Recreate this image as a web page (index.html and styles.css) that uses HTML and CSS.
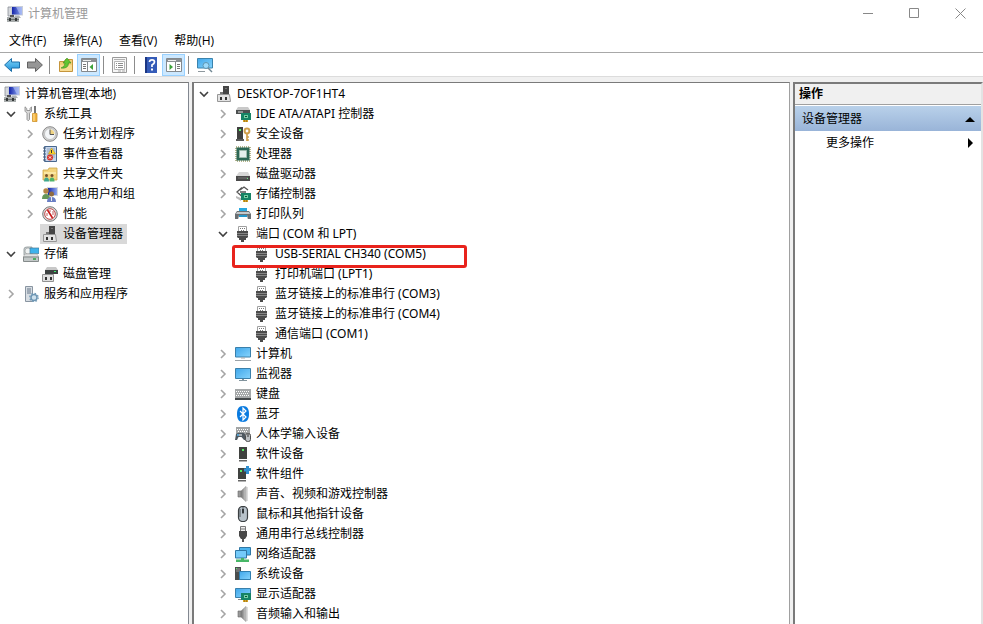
FILE: index.html
```html
<!DOCTYPE html>
<html lang="zh-CN">
<head>
    <meta charset="UTF-8">
    <meta name="viewport" content="width=device-width, initial-scale=1.0">
    <title>计算机管理</title>
    <link rel="stylesheet" href="styles.css">
</head>
<body>
    <!-- icon sprite -->
    <svg class="sprite" aria-hidden="true">
        <defs>
            <linearGradient id="g-screen" x1="0" y1="0" x2="1" y2="1">
                <stop offset="0" stop-color="#3fa6ea"/><stop offset="1" stop-color="#86d4fd"/>
            </linearGradient>
            <linearGradient id="g-navy" x1="0" y1="0" x2="1" y2="0">
                <stop offset="0" stop-color="#1222a8"/><stop offset="1" stop-color="#8fa8f0"/>
            </linearGradient>
            <linearGradient id="g-back" x1="0" y1="0" x2="0" y2="1">
                <stop offset="0" stop-color="#7fd4f8"/><stop offset="1" stop-color="#1c8fd8"/>
            </linearGradient>
            <linearGradient id="g-metal" x1="0" y1="0" x2="1" y2="0">
                <stop offset="0" stop-color="#6e6e6e"/><stop offset="1" stop-color="#d0d0d0"/>
            </linearGradient>
        </defs>
        <symbol id="right" viewBox="0 0 10 10"><path d="M3 1l4 4-4 4" fill="none" stroke="#a6a6a6" stroke-width="1.6"/></symbol>
        <symbol id="down" viewBox="0 0 10 10"><path d="M1 3l4 4 4-4" fill="none" stroke="#404040" stroke-width="1.6"/></symbol>
        <symbol id="mmc" viewBox="0 0 16 16">
            <path d="M1 1h4v9H1z" fill="#d5d8dc" stroke="#8a9098" stroke-width=".8"/>
            <path d="M4 0h12v9.500H4z" fill="#c9ced8"/><path d="M5 1h10v7.500H5z" fill="url(#g-navy)"/>
            <path d="M9 1l4 7.500h2V1z" fill="#b8c6f8" opacity=".6"/>
            <path d="M8 9.500h4l2 2.500H7z" fill="#aeb3b8"/>
            <path d="M3 9h4v2H3z" fill="#555"/><path d="M0 11h12v5H0z" fill="#a9adad"/>
            <path d="M0 13h12v1H0z" fill="#6d7373"/><path d="M2 12h2v3H2zM8 12h2v3H8z" fill="#343838"/>
        </symbol>
        <symbol id="device" viewBox="0 0 16 16">
            <path d="M7 0h6v9H7z" fill="#454545"/><path d="M9 2h2v1H9z" fill="#777"/>
            <path d="M4 6h3v3H4z" fill="#777"/>
            <path d="M1.500 8.500h12l1 7H1.500z" fill="#e3e3e3" stroke="#969696"/>
            <path d="M4 11h2v3H4zM9 11h2v3H9z" fill="#333"/>
        </symbol>
        <symbol id="tools" viewBox="0 0 16 16">
            <path d="M2 .8v4.400l2 2V13.500q1 2.500 2.500 0V7.200l2-2V.8L7 2.500v2H3.800v-2z" fill="#d9d9d9" stroke="#858585" stroke-width=".8"/>
            <path d="M11 0h2v7h-2z" fill="#777"/><path d="M9.500 7.500h4.500v8h-4.500z" fill="#f4b33c" stroke="#c78a1c" stroke-width=".7"/>
            <path d="M11 8v7" stroke="#ffe2a0"/>
        </symbol>
        <symbol id="clock" viewBox="0 0 16 16">
            <circle cx="8" cy="8" r="7.300" fill="#d5d5d5" stroke="#888"/><circle cx="8" cy="8" r="5.500" fill="#f4f6f8" stroke="#a9a9a9" stroke-width=".6"/>
            <path d="M8 8V3.500A4.500 4.500 0 0 1 12.500 8z" fill="#f0d484"/><path d="M8 3.500V8.500h4" fill="none" stroke="#555"/>
        </symbol>
        <symbol id="events" viewBox="0 0 16 16">
            <path d="M2.500.5h12v15h-12z" fill="#c5d5eb" stroke="#49688f"/><path d="M5 3h8M5 5h8M5 7h8M5 9h8M5 11h8" stroke="#8699b2" stroke-width=".8"/>
            <path d="M1 2h3M1 5h3M1 8h3M1 11h3M1 14h3" stroke="#455d7a"/>
            <path d="M9.500 2l4 6h-7z" fill="#ffd72e" stroke="#c79b16" stroke-width=".6"/><path d="M9.500 4v3" stroke="#333"/>
            <circle cx="8" cy="11.500" r="3" fill="#d9352d"/><path d="M6.800 10.300l2.400 2.400M9.200 10.300l-2.400 2.400" stroke="#fff" stroke-width=".9"/>
        </symbol>
        <symbol id="share" viewBox="0 0 16 16">
            <path d="M1 4h5l1-2h8v12H1z" fill="#f3d47c" stroke="#cda648" stroke-width=".8"/><path d="M2 6h12v2H2z" fill="#fae7a4"/>
            <circle cx="4.500" cy="9.500" r="1.500" fill="#76512d"/><path d="M2 15.500q0-4 2.500-4t2.500 4z" fill="#3fa78e"/>
            <circle cx="10" cy="9.500" r="1.500" fill="#76512d"/><path d="M7.500 15.500q0-4 2.500-4t2.500 4z" fill="#4eb46a"/>
        </symbol>
        <symbol id="users" viewBox="0 0 16 16">
            <path d="M5 1h11v9H5z" fill="#d3d7df"/><path d="M6 2h9v7H6z" fill="url(#g-navy)"/>
            <circle cx="4" cy="5" r="2.700" fill="#b58547"/><path d="M0 13q0-5 4-5t4 5z" fill="#65965a"/>
            <circle cx="9.500" cy="8" r="2.500" fill="#8f6b42"/><path d="M5 16q0-5 4.500-5t4.500 5z" fill="#6a7fc4"/><path d="M9 11h1v4H9z" fill="#eee"/>
        </symbol>
        <symbol id="perf" viewBox="0 0 16 16">
            <circle cx="8" cy="8" r="7.300" fill="#ddd" stroke="#777"/><circle cx="8" cy="8" r="5.300" fill="#fff" stroke="#b33" stroke-width=".9"/>
            <path d="M5.500 4l5 8" stroke="#c81818" stroke-width="1.600"/><path d="M5 7v3M8 4v2M11 5v4" stroke="#a33" stroke-width=".8"/>
        </symbol>
        <symbol id="storage" viewBox="0 0 16 16">
            <path d="M1 3q0-2 3-2h5v8H1z" fill="#cbd2d4" stroke="#8b9496" stroke-width=".8"/><circle cx="5" cy="5" r="3" fill="#eef2f2" stroke="#999" stroke-width=".6"/>
            <path d="M7 2h9v5.500H7z" fill="#3fb2ec" stroke="#447b9b" stroke-width=".7"/>
            <path d="M2 8h12l2 3H0z" fill="#e0e2e2" stroke="#999" stroke-width=".5"/><path d="M.5 11h15v4.500H.500z" fill="#c3c8c8" stroke="#858b8b"/><path d="M10 13h3" stroke="#29a541" stroke-width="1.500"/>
        </symbol>
        <symbol id="diskmgr" viewBox="0 0 16 16">
            <path d="M5 1h9l2 3H3z" fill="#c8c8c8"/><path d="M3 4h13v4H3z" fill="#3e4242"/><path d="M12 5h2v1h-2z" fill="#3df06d"/>
            <path d="M.5 8.500h11v7H.500z" fill="#e0e0e0" stroke="#929292"/><path d="M3 11h2v3H3zM8 11h2v3H8z" fill="#333"/>
        </symbol>
        <symbol id="services" viewBox="0 0 16 16">
            <path d="M2.500.5h7v15h-7z" fill="#d7dde3" stroke="#8995a1"/><path d="M4 3h4M4 5h4M4 7h4" stroke="#667788"/>
            <circle cx="11" cy="11.500" r="3" fill="#cfe1ed" stroke="#6f97b4" stroke-width="1.500"/>
            <circle cx="11" cy="11.500" r="4.200" fill="none" stroke="#6f97b4" stroke-width="1.200" stroke-dasharray="1.600 1.700"/>
        </symbol>
        <symbol id="board" viewBox="0 0 16 16">
            <path d="M6 7h10v7H6z" fill="#168365"/><path d="M9 9h4v3H9z" fill="#75d1a3"/><path d="M10 10h2v1h-2z" fill="#0d4a36"/>
            <path d="M8 14h5v2H8z" fill="#d7a326"/><path d="M9.500 14v2M11.500 14v2" stroke="#805d10" stroke-width=".5"/>
        </symbol>
        <symbol id="ide" viewBox="0 0 16 16">
            <path d="M3 1h10l2 3H1z" fill="#c9c9c9"/><path d="M1 4h14v4H1z" fill="#4d5050"/><path d="M3 6h5" stroke="#ddd"/><use href="#board"/>
        </symbol>
        <symbol id="security" viewBox="0 0 16 16">
            <path d="M2 1h6v12H2z" fill="#3f403e"/><path d="M4 3h2v2H4z" fill="#5df06b"/><path d="M1 13h8v2H1z" fill="#5a5a5a"/>
            <circle cx="12" cy="5" r="2.400" fill="none" stroke="#d0a04c" stroke-width="2"/><path d="M12 7.500V15M12 11h2M12 14h2" stroke="#d0a04c" stroke-width="1.700"/>
        </symbol>
        <symbol id="cpu" viewBox="0 0 16 16">
            <path d="M1 1h14v14H1z" fill="none" stroke="#9d9d69" stroke-width="1.500" stroke-dasharray="1 1"/>
            <path d="M1.500 1.500h13v13h-13z" fill="#2c6754"/><path d="M4.500 4.500h7v7h-7z" fill="#e4eeeb" stroke="#9ebaae"/>
        </symbol>
        <symbol id="disk" viewBox="0 0 16 16">
            <path d="M4 6h9l2 4H1z" fill="#d7d7d7"/><path d="M1 10h14v5H1z" fill="#4a4a4a"/><path d="M3 12h10" stroke="#777"/><path d="M12 12h1v1h-1z" fill="#70e784"/>
        </symbol>
        <symbol id="scsi" viewBox="0 0 16 16">
            <path d="M7 1.500L2 6l5 4.500M5 6h6M5 4l4-3 4 3" fill="none" stroke="#555" stroke-width="1.300"/><path d="M1 10l5 2v3l-5-3z" fill="#bbb"/><use href="#board"/>
        </symbol>
        <symbol id="printer" viewBox="0 0 16 16">
            <path d="M4 2h8v4H4z" fill="#28a9e0"/><path d="M2 5h12l2 3v5H0V8z" fill="#6a6f72"/><path d="M2 6h12l1 2H1z" fill="#c4c8ca"/>
            <path d="M4 9h8l1 5H3z" fill="#fff"/><path d="M4 9h8v2H4z" fill="#2596c9"/>
        </symbol>
        <symbol id="port" viewBox="0 0 16 16">
            <path d="M3.500.5h8v5h-8z" fill="#fff" stroke="#a0a0a0"/><path d="M5 2h1v1H5zM7 2h1v1H7zM9 2h1v1H9zM6 4h1v1H6zM8 4h1v1H8z" fill="#777"/>
            <path d="M2 5h11v6l-1 1H3l-1-1z" fill="#4b4b4b"/><path d="M2 7.500h11M2 9.500h11" stroke="#858585"/><path d="M4 12h2v2H4zM9 12h2v2H9zM6 11h3v5H6z" fill="#4b4b4b"/>
        </symbol>
        <symbol id="computer" viewBox="0 0 16 16">
            <path d="M.5 1.500h15v9.500H.500z" fill="url(#g-screen)" stroke="#3a80ab"/><path d="M0 14.500h16" stroke="#9aa2a8"/><path d="M6 12h4" stroke="#aaa"/>
        </symbol>
        <symbol id="monitor" viewBox="0 0 16 16">
            <path d="M.5 2.500h15v10H.500z" fill="url(#g-screen)" stroke="#3a80ab"/><path d="M7 13h2v1h3v1H4v-1h3z" fill="#81939d"/>
        </symbol>
        <symbol id="keyboard" viewBox="0 0 16 16">
            <path d="M0 3h16v9H0z" fill="#a5a8a9"/><path d="M0 12h16v2H0z" fill="#45494b"/>
            <path d="M1 5.500h14M2 7.500h12M1 9.500h14" stroke="#fff" stroke-dasharray="1 1"/>
        </symbol>
        <symbol id="bluetooth" viewBox="0 0 16 16">
            <path d="M8 0c4.500 0 6 3.500 6 8s-1.500 8-6 8-6-3.500-6-8 1.500-8 6-8z" fill="#0a7be0"/><path d="M5 5l6 6-3 3V2l3 3-6 6" fill="none" stroke="#fff" stroke-width="1.200"/>
        </symbol>
        <symbol id="hid" viewBox="0 0 16 16">
            <path d="M1 1h14v7H1z" fill="#a2a5a5"/><path d="M2 3.500h12M3 5.500h10" stroke="#fff" stroke-dasharray="1 1"/>
            <path d="M1 8q3-2 5-1 2-1 4 1l1 6H9L6.500 11h-3L2 14H0z" fill="#4e5961"/><circle cx="3" cy="9" r="1" fill="#5eb8f0"/><path d="M4 9h3" stroke="#fff"/>
            <rect x="10.500" y="7.500" width="5" height="8" rx="2" fill="#bcc1c4" stroke="#4d4d4d"/><path d="M13 8v3" stroke="#333"/>
        </symbol>
        <symbol id="software" viewBox="0 0 16 16">
            <path d="M4 1h8v12H4z" fill="#40423f"/><path d="M7 3h2v2H7z" fill="#54ee63"/><path d="M4 14h8v1.500H4z" fill="#666"/>
        </symbol>
        <symbol id="component" viewBox="0 0 16 16">
            <path d="M3 2h8v11H3z" fill="#40423f"/><path d="M5 4h2v2H5z" fill="#54ee63"/><path d="M3 14h8v1.500H3z" fill="#666"/>
            <path d="M11 0h3v2h2v3h-2v3h-3V5.500H9v-3h2z" fill="#2f8fd0"/>
        </symbol>
        <symbol id="sound" viewBox="0 0 16 16">
            <path d="M3 5h3v6H3z" fill="#999" stroke="#666" stroke-width=".6"/><path d="M6 5l5-4.500v15L6 11z" fill="url(#g-metal)" stroke="#8a8a8a" stroke-width=".6"/><path d="M12 1v14" stroke="#bbb"/>
        </symbol>
        <symbol id="mouse" viewBox="0 0 16 16">
            <rect x="3.500" y=".5" width="9" height="15" rx="4" fill="#b8c2ca" stroke="#3b3f42" stroke-width="1.200"/><path d="M8 1v7M5 3v8" stroke="#4d5357"/><path d="M7 3h2v4H7z" fill="#33383b"/>
        </symbol>
        <symbol id="usb" viewBox="0 0 16 16">
            <path d="M5.500.5h5v5h-5z" fill="#eee" stroke="#777"/><path d="M7 2v2M9 2v2" stroke="#777"/><path d="M4 5h8v5l-2 3H6l-2-3z" fill="#484848"/><path d="M7 13h2v3H7z" fill="#555"/>
        </symbol>
        <symbol id="network" viewBox="0 0 16 16">
            <path d="M4.500 1.500h11v7.500h-11z" fill="#4cb4ee" stroke="#3078a5"/><path d="M.5 4.500h11v7.500H.500z" fill="#74cbfa" stroke="#3078a5"/>
            <path d="M6 12h3v1.500h5V16H1v-2.500h5z" fill="#48b767"/>
        </symbol>
        <symbol id="system" viewBox="0 0 16 16">
            <path d="M0 1h6v13H0z" fill="#4a4e4e"/><path d="M1 3h4M1 5h4" stroke="#999"/><path d="M1 2h1v1H1z" fill="#5e6"/><path d="M4.500 5.500h11v8h-11z" fill="url(#g-screen)" stroke="#2f7eb0"/>
        </symbol>
        <symbol id="display" viewBox="0 0 16 16">
            <path d="M.5 2.500h15v9H.500z" fill="url(#g-screen)" stroke="#3a80ab"/><path d="M3 13h4v1H3z" fill="#888"/><use href="#board"/>
        </symbol>
        <symbol id="back" viewBox="0 0 16 16"><path d="M.6 8L7.500 1.500v3.500h8v6h-8v3.500z" fill="url(#g-back)" stroke="#1d6fa8"/></symbol>
        <symbol id="forward" viewBox="0 0 16 16"><path d="M15.400 8L8.500 1.500v3.500h-8v6h8v3.500z" fill="#969696" stroke="#626262"/></symbol>
        <symbol id="up" viewBox="0 0 16 16">
            <path d="M1.500 4.500h5l1-2h7v12h-13z" fill="#f3cf78" stroke="#c5953c"/><path d="M2 8h12v6H2z" fill="#f8dc93"/>
            <path d="M3 11q4-1 4-5H5L9 1l4 5h-2.500q0 6-7.500 5z" fill="#62c532" stroke="#348c19" stroke-width=".6"/>
        </symbol>
        <symbol id="treepane" viewBox="0 0 16 16">
            <path d="M.5 1.500h15v13H.500z" fill="#fff" stroke="#84898d"/><path d="M1 2h14v3H1z" fill="#8b9094"/><path d="M2 3.500h8" stroke="#eee"/>
            <path d="M6.500 5v9" stroke="#84898d"/><path d="M2 7.500h3M2 9.500h3M2 11.500h3" stroke="#777"/><path d="M12 7v6L8.500 10z" fill="#3ca33a"/>
        </symbol>
        <symbol id="actionpane" viewBox="0 0 16 16">
            <path d="M.5 1.500h15v13H.500z" fill="#fff" stroke="#84898d"/><path d="M1 2h14v3H1z" fill="#8b9094"/><path d="M2 3.500h8" stroke="#eee"/>
            <path d="M9.500 5v9" stroke="#84898d"/><path d="M11 7.500h3M11 9.500h3M11 11.500h3" stroke="#777"/><path d="M3.500 7v6L7 10z" fill="#3ca33a"/>
        </symbol>
        <symbol id="props" viewBox="0 0 16 16">
            <path d="M.5.5h14v15H.500z" fill="#f6f6f6" stroke="#9a9a9a"/><path d="M2.500 4.500h10v8h-10z" fill="#fff" stroke="#b5b5b5"/><path d="M2 2.500h11" stroke="#b0b0b0"/>
            <path d="M4 6.500h1M4 8.500h1M4 10.500h1M6 6.500h5M6 8.500h5M6 10.500h5" stroke="#8d8d8d"/><path d="M6 14h3M10 14h3" stroke="#aaa"/>
        </symbol>
        <symbol id="help" viewBox="0 0 16 16">
            <path d="M2 0h12v16H2z" fill="#345bb8"/><path d="M2 0h2v16H2z" fill="#1c3784"/>
            <path d="M6.500 5q0-2.200 2.500-2.200T11.500 5Q11.500 6.500 9 8v2" fill="none" stroke="#fff" stroke-width="1.700"/><path d="M8 11.500h2v2H8z" fill="#fff"/>
        </symbol>
        <symbol id="scan" viewBox="0 0 16 16">
            <path d="M.5 1.500h15v9.500H.500z" fill="url(#g-screen)" stroke="#3b83ad"/><path d="M1 14.500h7" stroke="#8e989e"/>
            <circle cx="9" cy="8.500" r="3" fill="#9bd9fb" stroke="#5d95b2"/><path d="M11 11l4 4" stroke="#718793" stroke-width="1.500"/>
        </symbol>
    </svg>

    <div class="window">
        <header class="titlebar">
            <svg class="icon"><use href="#mmc"/></svg>
            <h1>计算机管理</h1>
            <div class="caption">
                <button type="button" aria-label="最小化"><svg viewBox="0 0 11 11"><path d="M0 5.500h10"/></svg></button>
                <button type="button" aria-label="最大化"><svg viewBox="0 0 11 11"><path d="M.5.5h9v9h-9z"/></svg></button>
                <button type="button" aria-label="关闭"><svg viewBox="0 0 11 11"><path d="M.5.5l10 10M10.500.5l-10 10"/></svg></button>
            </div>
        </header>

        <nav class="menubar">
            <button type="button">文件(F)</button>
            <button type="button">操作(A)</button>
            <button type="button">查看(V)</button>
            <button type="button">帮助(H)</button>
        </nav>

        <div class="toolbar">
            <button type="button" aria-label="后退"><svg class="icon"><use href="#back"/></svg></button>
            <button type="button" aria-label="前进"><svg class="icon"><use href="#forward"/></svg></button>
            <span class="sep"></span>
            <button type="button" aria-label="向上"><svg class="icon"><use href="#up"/></svg></button>
            <button type="button" class="on" aria-label="显示控制台树"><svg class="icon"><use href="#treepane"/></svg></button>
            <span class="sep"></span>
            <button type="button" aria-label="属性"><svg class="icon"><use href="#props"/></svg></button>
            <span class="sep"></span>
            <button type="button" aria-label="帮助"><svg class="icon"><use href="#help"/></svg></button>
            <button type="button" class="on" aria-label="显示操作窗格"><svg class="icon"><use href="#actionpane"/></svg></button>
            <span class="sep"></span>
            <button type="button" aria-label="扫描检测硬件改动"><svg class="icon"><use href="#scan"/></svg></button>
        </div>

        <main class="panes">
            <section class="pane console">
                <ul class="tree">
                    <li>
                        <div class="row"><span class="label"><svg class="icon"><use href="#mmc"/></svg>计算机管理(本地)</span></div>
                        <ul>
                            <li>
                                <div class="row"><button type="button" class="toggle" aria-label="折叠"><svg><use href="#down"/></svg></button><span class="label"><svg class="icon"><use href="#tools"/></svg>系统工具</span></div>
                                <ul>
                                    <li class="row"><button type="button" class="toggle" aria-label="展开"><svg><use href="#right"/></svg></button><span class="label"><svg class="icon"><use href="#clock"/></svg>任务计划程序</span></li>
                                    <li class="row"><button type="button" class="toggle" aria-label="展开"><svg><use href="#right"/></svg></button><span class="label"><svg class="icon"><use href="#events"/></svg>事件查看器</span></li>
                                    <li class="row"><button type="button" class="toggle" aria-label="展开"><svg><use href="#right"/></svg></button><span class="label"><svg class="icon"><use href="#share"/></svg>共享文件夹</span></li>
                                    <li class="row"><button type="button" class="toggle" aria-label="展开"><svg><use href="#right"/></svg></button><span class="label"><svg class="icon"><use href="#users"/></svg>本地用户和组</span></li>
                                    <li class="row"><button type="button" class="toggle" aria-label="展开"><svg><use href="#right"/></svg></button><span class="label"><svg class="icon"><use href="#perf"/></svg>性能</span></li>
                                    <li class="row"><span class="label selected"><svg class="icon"><use href="#device"/></svg>设备管理器</span></li>
                                </ul>
                            </li>
                            <li>
                                <div class="row"><button type="button" class="toggle" aria-label="折叠"><svg><use href="#down"/></svg></button><span class="label"><svg class="icon"><use href="#storage"/></svg>存储</span></div>
                                <ul>
                                    <li class="row"><span class="label"><svg class="icon"><use href="#diskmgr"/></svg>磁盘管理</span></li>
                                </ul>
                            </li>
                            <li class="row"><button type="button" class="toggle" aria-label="展开"><svg><use href="#right"/></svg></button><span class="label"><svg class="icon"><use href="#services"/></svg>服务和应用程序</span></li>
                        </ul>
                    </li>
                </ul>
            </section>

            <section class="pane devices">
                <ul class="tree">
                    <li>
                        <div class="row"><button type="button" class="toggle" aria-label="折叠"><svg><use href="#down"/></svg></button><span class="label"><svg class="icon"><use href="#device"/></svg>DESKTOP-7OF1HT4</span></div>
                        <ul>
                            <li class="row"><button type="button" class="toggle" aria-label="展开"><svg><use href="#right"/></svg></button><span class="label"><svg class="icon"><use href="#ide"/></svg>IDE ATA/ATAPI 控制器</span></li>
                            <li class="row"><button type="button" class="toggle" aria-label="展开"><svg><use href="#right"/></svg></button><span class="label"><svg class="icon"><use href="#security"/></svg>安全设备</span></li>
                            <li class="row"><button type="button" class="toggle" aria-label="展开"><svg><use href="#right"/></svg></button><span class="label"><svg class="icon"><use href="#cpu"/></svg>处理器</span></li>
                            <li class="row"><button type="button" class="toggle" aria-label="展开"><svg><use href="#right"/></svg></button><span class="label"><svg class="icon"><use href="#disk"/></svg>磁盘驱动器</span></li>
                            <li class="row"><button type="button" class="toggle" aria-label="展开"><svg><use href="#right"/></svg></button><span class="label"><svg class="icon"><use href="#scsi"/></svg>存储控制器</span></li>
                            <li class="row"><button type="button" class="toggle" aria-label="展开"><svg><use href="#right"/></svg></button><span class="label"><svg class="icon"><use href="#printer"/></svg>打印队列</span></li>
                            <li>
                                <div class="row"><button type="button" class="toggle" aria-label="折叠"><svg><use href="#down"/></svg></button><span class="label"><svg class="icon"><use href="#port"/></svg>端口 (COM 和 LPT)</span></div>
                                <ul>
                                    <li class="row marked"><span class="label"><svg class="icon"><use href="#port"/></svg>USB-SERIAL CH340 (COM5)</span></li>
                                    <li class="row"><span class="label"><svg class="icon"><use href="#port"/></svg>打印机端口 (LPT1)</span></li>
                                    <li class="row"><span class="label"><svg class="icon"><use href="#port"/></svg>蓝牙链接上的标准串行 (COM3)</span></li>
                                    <li class="row"><span class="label"><svg class="icon"><use href="#port"/></svg>蓝牙链接上的标准串行 (COM4)</span></li>
                                    <li class="row"><span class="label"><svg class="icon"><use href="#port"/></svg>通信端口 (COM1)</span></li>
                                </ul>
                            </li>
                            <li class="row"><button type="button" class="toggle" aria-label="展开"><svg><use href="#right"/></svg></button><span class="label"><svg class="icon"><use href="#computer"/></svg>计算机</span></li>
                            <li class="row"><button type="button" class="toggle" aria-label="展开"><svg><use href="#right"/></svg></button><span class="label"><svg class="icon"><use href="#monitor"/></svg>监视器</span></li>
                            <li class="row"><button type="button" class="toggle" aria-label="展开"><svg><use href="#right"/></svg></button><span class="label"><svg class="icon"><use href="#keyboard"/></svg>键盘</span></li>
                            <li class="row"><button type="button" class="toggle" aria-label="展开"><svg><use href="#right"/></svg></button><span class="label"><svg class="icon"><use href="#bluetooth"/></svg>蓝牙</span></li>
                            <li class="row"><button type="button" class="toggle" aria-label="展开"><svg><use href="#right"/></svg></button><span class="label"><svg class="icon"><use href="#hid"/></svg>人体学输入设备</span></li>
                            <li class="row"><button type="button" class="toggle" aria-label="展开"><svg><use href="#right"/></svg></button><span class="label"><svg class="icon"><use href="#software"/></svg>软件设备</span></li>
                            <li class="row"><button type="button" class="toggle" aria-label="展开"><svg><use href="#right"/></svg></button><span class="label"><svg class="icon"><use href="#component"/></svg>软件组件</span></li>
                            <li class="row"><button type="button" class="toggle" aria-label="展开"><svg><use href="#right"/></svg></button><span class="label"><svg class="icon"><use href="#sound"/></svg>声音、视频和游戏控制器</span></li>
                            <li class="row"><button type="button" class="toggle" aria-label="展开"><svg><use href="#right"/></svg></button><span class="label"><svg class="icon"><use href="#mouse"/></svg>鼠标和其他指针设备</span></li>
                            <li class="row"><button type="button" class="toggle" aria-label="展开"><svg><use href="#right"/></svg></button><span class="label"><svg class="icon"><use href="#usb"/></svg>通用串行总线控制器</span></li>
                            <li class="row"><button type="button" class="toggle" aria-label="展开"><svg><use href="#right"/></svg></button><span class="label"><svg class="icon"><use href="#network"/></svg>网络适配器</span></li>
                            <li class="row"><button type="button" class="toggle" aria-label="展开"><svg><use href="#right"/></svg></button><span class="label"><svg class="icon"><use href="#system"/></svg>系统设备</span></li>
                            <li class="row"><button type="button" class="toggle" aria-label="展开"><svg><use href="#right"/></svg></button><span class="label"><svg class="icon"><use href="#display"/></svg>显示适配器</span></li>
                            <li class="row"><button type="button" class="toggle" aria-label="展开"><svg><use href="#right"/></svg></button><span class="label"><svg class="icon"><use href="#sound"/></svg>音频输入和输出</span></li>
                        </ul>
                    </li>
                </ul>
            </section>

            <aside class="pane actions">
                <h2>操作</h2>
                <button type="button" class="group">设备管理器<svg viewBox="0 0 10 10"><path d="M0 8l5-5 5 5z"/></svg></button>
                <button type="button" class="more">更多操作<svg viewBox="0 0 10 10"><path d="M3 0l5 5-5 5z"/></svg></button>
            </aside>
        </main>
    </div>
</body>
</html>
```
FILE: styles.css
```css
* {
    margin: 0;
    padding: 0;
    box-sizing: border-box;
}

body {
    font-family: "Open Sans", "Noto Sans CJK SC", sans-serif;
    font-size: 12px;
    line-height: 20px;
    color: #000;
    background-color: #fff;
}

button {
    font: inherit;
    color: inherit;
    background: none;
    border: none;
}

ul {
    list-style: none;
}

.sprite {
    position: absolute;
    width: 0;
    height: 0;
}

.icon {
    width: 16px;
    height: 16px;
    flex: none;
}

.window {
    display: flex;
    flex-direction: column;
    height: 100vh;
    overflow: hidden;
}

/* title bar */
.titlebar {
    display: flex;
    align-items: center;
    flex: none;
    height: 27px;
    padding-left: 7px;
    gap: 5px;
}

.titlebar h1 {
    font-size: 12px;
    font-weight: normal;
    color: #999;
}

.caption {
    display: flex;
    margin-left: auto;
}

.caption button {
    width: 46px;
    height: 27px;
    display: flex;
    align-items: center;
    justify-content: center;
}

.caption svg {
    width: 11px;
    height: 11px;
    fill: none;
    stroke: #888;
}

/* menu bar */
.menubar {
    display: flex;
    align-items: center;
    flex: none;
    gap: 1px;
    height: 26px;
    padding: 2px 0 0 1px;
    border-bottom: 1px solid #a8a8a8;
}

.menubar button {
    padding: 0 8px;
}

/* toolbar */
.toolbar {
    display: flex;
    align-items: center;
    flex: none;
    height: 24px;
    padding-top: 1px;
    border-bottom: 1px solid #dcdcdc;
}

.toolbar button {
    width: 23px;
    height: 22px;
    display: flex;
    align-items: center;
    justify-content: center;
}

.toolbar .on {
    background-color: #cce8ff;
    border: 1px solid #99d1ff;
}

.sep {
    width: 1px;
    height: 18px;
    margin: 0 4px 0 3px;
    background-color: #8c8c8c;
}

/* panes */
.panes {
    display: grid;
    grid-template-columns: 189px 1fr 190px;
    gap: 3px;
    flex: 1;
    min-height: 0;
    padding-top: 5px;
    background-color: #f0f0f0;
}

.pane {
    background-color: #fff;
    border-top: 2px solid #7a7a7a;
    overflow: hidden;
}

.console {
    border-top-width: 1px;
    border-right: 1px solid #828790;
    padding: 1px 0 0 2px;
}

.devices {
    font-family: "Noto Sans", "Noto Sans CJK SC", sans-serif;
    border-top-width: 1px;
    border-left: 2px solid #7a7a7a;
    border-right: 1px solid #a0a0a0;
    padding: 1px 0 0 20px;
}

.tree ul {
    padding-left: 19px;
}

.row {
    display: flex;
    align-items: center;
    height: 20px;
    white-space: nowrap;
}

.toggle {
    width: 17px;
    height: 20px;
    margin-left: -17px;
    padding-left: 2px;
    display: flex;
    align-items: center;
}

.toggle svg {
    width: 10px;
    height: 10px;
}

.label {
    display: flex;
    align-items: center;
    gap: 5px;
    padding: 0 4px 0 2px;
}

.selected {
    background-color: #d9d9d9;
}

/* red frame round the serial port */
.marked {
    position: relative;
}

.marked::after {
    content: "";
    position: absolute;
    top: 1px;
    left: -20px;
    box-sizing: border-box;
    width: 235px;
    height: 23px;
    border: 3px solid #e8231c;
    border-radius: 3px;
    z-index: 1;
}

/* actions */
.actions {
    display: flex;
    flex-direction: column;
    border-left: 2px solid #7a7a7a;
    border-right: 2px solid #e3e3e3;
}

.actions h2 {
    height: 21px;
    padding-left: 4px;
    font-size: 12px;
    font-weight: bold;
    background-color: #f0f0f0;
    border-bottom: 1px solid #a0a0a0;
}

.actions button {
    display: flex;
    align-items: center;
    justify-content: space-between;
    height: 25px;
    padding: 0 6px 0 7px;
}

.actions svg {
    width: 10px;
    height: 10px;
}

.actions .group {
    margin-top: 1px;
    background: linear-gradient(#b9d1ea, #99b4d8);
}

.actions .more {
    height: 23px;
    padding-left: 31px;
}
```
